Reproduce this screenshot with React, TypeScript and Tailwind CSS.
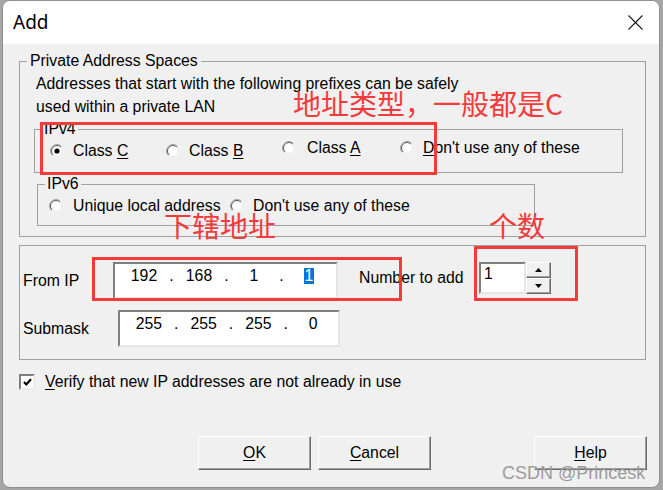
import React from "react";

function Radio({ checked }: { checked?: boolean }) {
  return (
    <svg width="14" height="14" viewBox="0 0 14 14" className="shrink-0">
      <circle cx="7" cy="7" r="6.5" fill="#fff" />
      <path d="M2.4 11.6 A6.5 6.5 0 0 1 11.6 2.4" fill="none" stroke="#a0a0a0" strokeWidth="1" />
      <path d="M11.6 2.4 A6.5 6.5 0 0 1 2.4 11.6" fill="none" stroke="#f4f4f4" strokeWidth="1" />
      <path d="M3.1 10.9 A5.5 5.5 0 0 1 10.9 3.1" fill="none" stroke="#5a5a5a" strokeWidth="1" />
      <path d="M10.9 3.1 A5.5 5.5 0 0 1 3.1 10.9" fill="none" stroke="#e3e3e3" strokeWidth="1" />
      {checked && <circle cx="7" cy="7" r="2.6" fill="#000" />}
    </svg>
  );
}

function U({ children }: { children: React.ReactNode }) {
  return <span className="underline underline-offset-2">{children}</span>;
}

function RadioItem({ checked, label, w, extra }: { checked?: boolean; label: React.ReactNode; w: string; extra?: string }) {
  return (
    <div className={`flex items-center gap-[9px] ${w} ${extra ?? ""}`}>
      <Radio checked={checked} />
      <span>{label}</span>
    </div>
  );
}

function IpField({ values, highlightLast, w, h }: { values: string[]; highlightLast?: boolean; w: string; h: string }) {
  return (
    <div
      className={`${w} ${h} bg-white border-2 border-t-[#7f7f7f] border-l-[#7f7f7f] border-r-[#e6e6e6] border-b-[#e6e6e6] flex items-start pl-[4px] pt-[3px] leading-[18px]`}
    >
      {values.map((v, i) => (
        <React.Fragment key={i}>
          <span className="w-[50px] text-center">
            {highlightLast && i === values.length - 1 ? (
              <span className="inline-block bg-[#0078d7] text-white px-[1px] leading-[16px]">{v}</span>
            ) : (
              v
            )}
          </span>
          {i < values.length - 1 && <span className="w-[5px] text-center">.</span>}
        </React.Fragment>
      ))}
    </div>
  );
}

function Btn({ children, extra }: { children: React.ReactNode; extra?: string }) {
  return (
    <div
      className={`w-[113px] h-[34px] flex items-center justify-center bg-[#f0f0f0] border border-t-white border-l-white border-r-[#696969] border-b-[#696969] shadow-[inset_-1px_-1px_#a0a0a0] ${extra ?? ""}`}
    >
      {children}
    </div>
  );
}

function SpinBtn({ up }: { up?: boolean }) {
  return (
    <div className="h-[16px] w-[25px] flex items-center justify-center bg-[#f0f0f0] border border-t-white border-l-white border-r-[#696969] border-b-[#696969] shadow-[inset_-1px_-1px_#a0a0a0]">
      <svg width="7" height="4" viewBox="0 0 7 4">
        {up ? <path d="M0 4 L3.5 0 L7 4 Z" fill="#000" /> : <path d="M0 0 L3.5 4 L7 0 Z" fill="#000" />}
      </svg>
    </div>
  );
}

export default function App() {
  return (
    <div className="relative w-[663px] h-[490px] bg-[#a6a6a6] overflow-hidden font-['Liberation_Sans',Arial,sans-serif] text-[15.8px] text-black">
      <div className="ml-[2px] w-[658px] h-[488px] rounded-[8px] border border-[#8f8f8f] bg-[#f0f0f0] overflow-hidden flex flex-col">
        {/* Title bar */}
        <div className="h-[43px] bg-white flex items-center justify-between shrink-0">
          <span className="pl-[10px] text-[19px] font-['Noto_Sans',sans-serif] leading-none">Add</span>
          <svg width="15" height="15" viewBox="0 0 15 15" className="mr-[16px]">
            <path d="M0.5 0.5 L14.5 14.5 M14.5 0.5 L0.5 14.5" stroke="#1a1a1a" strokeWidth="1.1" />
          </svg>
        </div>

        {/* Private Address Spaces */}
        <fieldset className="mt-[8px] ml-[16px] w-[627px] border border-[#a0a0a0] pb-[10px]">
          <legend className="ml-[7px] px-[3px] leading-[18px]">Private Address Spaces</legend>
          <div className="pl-[16px] pt-[2px] leading-[23px]">
            <div>Addresses that start with the following prefixes can be safely</div>
            <div>used within a private LAN</div>
          </div>

          <fieldset className="mt-[2px] ml-[14px] w-[589px] border border-[#a0a0a0]">
            <legend className="ml-[7px] px-[2px] leading-[18px]">IPv4</legend>
            <div className="flex items-center h-[24px] mt-[1px] mb-[9px] pl-[15px]">
              <RadioItem checked w="w-[116px]" label={<>Class <U>C</U></>} />
              <RadioItem w="w-[116px]" label={<>Class <U>B</U></>} />
              <RadioItem w="w-[118px]" extra="mb-[6px] gap-[11px]" label={<>Class <U>A</U></>} />
              <RadioItem w="w-[180px]" extra="mb-[6px]" label={<><U>D</U>on't use any of these</>} />
            </div>
          </fieldset>

          <fieldset className="mt-[2px] ml-[17px] w-[498px] border border-[#a0a0a0]">
            <legend className="ml-[7px] px-[2px] leading-[18px]">IPv6</legend>
            <div className="flex items-center h-[24px] mt-[1px] mb-[7px] pl-[11px]">
              <RadioItem w="w-[181px]" extra="gap-[10px]" label="Unique local address" />
              <RadioItem w="w-[200px]" label="Don't use any of these" />
            </div>
          </fieldset>
        </fieldset>

        {/* IP box */}
        <div className="mt-[8px] ml-[16px] w-[627px] border border-[#a0a0a0] pt-[16px] pb-[12px] pl-[3px]">
          <div className="flex items-center">
            <span className="w-[90px]">From IP</span>
            <IpField w="w-[225px]" h="h-[37px]" values={["192", "168", "1", "1"]} highlightLast />
            <span className="ml-[21px] w-[120px] mb-[6px]">Number to add</span>
            <div className="self-start flex h-[32px]">
              <div className="w-[47px] h-[32px] bg-white border-2 border-t-[#7f7f7f] border-l-[#7f7f7f] border-r-[#e6e6e6] border-b-[#e6e6e6] pl-[3px] pt-[1px] leading-[18px]">
                1
              </div>
              <div className="flex flex-col">
                <SpinBtn up />
                <SpinBtn />
              </div>
            </div>
          </div>
          <div className="flex items-center mt-[11px]">
            <span className="w-[95px]">Submask</span>
            <IpField w="w-[222px]" h="h-[37px]" values={["255", "255", "255", "0"]} />
          </div>
        </div>

        {/* Checkbox */}
        <div className="mt-[14px] ml-[16px] flex items-center gap-[10px] h-[16px]">
          <div className="w-[16px] h-[16px] bg-white border-2 border-t-[#7f7f7f] border-l-[#7f7f7f] border-r-[#ececec] border-b-[#ececec] flex items-center justify-center">
            <svg width="9" height="8" viewBox="0 0 9 8">
              <path d="M1 4 L3.3 6.4 L8 1.2" fill="none" stroke="#000" strokeWidth="2.2" />
            </svg>
          </div>
          <span>
            <U>V</U>erify that new IP addresses are not already in use
          </span>
        </div>

        {/* Buttons */}
        <div className="mt-[46px] ml-[195px] flex">
          <Btn>
            <U>O</U>K
          </Btn>
          <Btn extra="ml-[7px]">
            <U>C</U>ancel
          </Btn>
          <Btn extra="ml-[103px]">
            <U>H</U>elp
          </Btn>
        </div>
      </div>

      {/* Red annotations */}
      <div className="absolute left-[40px] top-[122px] w-[397px] h-[53px] border-[3px] border-[#f23b3b]" />
      <div className="absolute left-[92px] top-[257px] w-[310px] h-[44px] border-[3px] border-[#f23b3b]" />
      <div className="absolute left-[474px] top-[246px] w-[104px] h-[55px] border-[3px] border-[#f23b3b]" />
      <div className="absolute left-[293px] top-[89px] text-[28px] leading-none text-[#f23b3b] font-['Noto_Sans_CJK_SC',sans-serif]">
        地址类型，一般都是C
      </div>
      <div className="absolute left-[164px] top-[211px] text-[28px] leading-none text-[#f23b3b] font-['Noto_Sans_CJK_SC',sans-serif]">
        下辖地址
      </div>
      <div className="absolute left-[489px] top-[211px] text-[28px] leading-none text-[#f23b3b] font-['Noto_Sans_CJK_SC',sans-serif]">
        个数
      </div>

      {/* Watermark */}
      <div className="absolute left-[502px] top-[462px] text-[18px] leading-[22px] text-[#9c9c9c] font-['Liberation_Sans',Arial,sans-serif]">
        CSDN @Princesk
      </div>
    </div>
  );
}
